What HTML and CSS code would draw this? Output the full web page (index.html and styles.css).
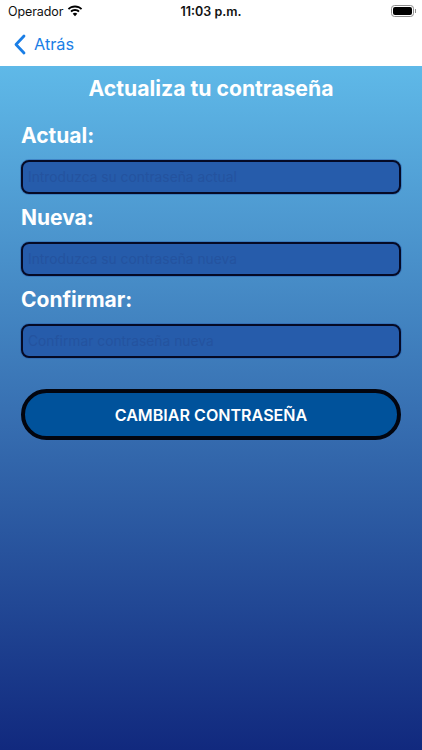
FILE: index.html
```html
<!DOCTYPE html>
<html lang="es">
<head>
<meta charset="utf-8">
<title>Actualiza tu contraseña</title>
<link rel="stylesheet" href="styles.css">
</head>
<body>
<div class="app">
  <header class="top">
    <div class="status">
      <div class="status-left">
        <span class="carrier">Operador</span>
        <svg class="wifi" width="16" height="12" viewBox="0 0 16 12"><path d="M8 2.4c2.3 0 4.4.9 5.900 2.300l1.300-1.300C13.300 1.600 10.800.4 8 .4S2.700 1.600.8 3.400l1.300 1.300C3.600 3.300 5.700 2.400 8 2.400z"/><path d="M8 6c1.300 0 2.400.5 3.300 1.300l1.300-1.300C11.400 4.800 9.800 4.100 8 4.100s-3.400.7-4.600 1.900l1.300 1.300C5.600 6.500 6.700 6 8 6z"/><path d="M8 7.700c-.9 0-1.700.3-2.300 1L8 11.200l2.300-2.500c-.6-.7-1.400-1-2.300-1z"/></svg>
      </div>
      <span class="time">11:03 p.m.</span>
      <div class="battery"><span class="battery-body"><span class="battery-fill"></span></span><span class="battery-cap"></span></div>
    </div>
    <nav class="nav">
      <svg class="chevron" width="13" height="21" viewBox="0 0 13 21"><path d="M11 2 3 10.500 11 19" fill="none" stroke="#1a7ee6" stroke-width="2.800" stroke-linecap="round" stroke-linejoin="round"/></svg>
      <span class="back">Atrás</span>
    </nav>
  </header>
  <main class="screen">
    <h1 class="title">Actualiza tu contraseña</h1>
    <div class="field">
      <label class="label">Actual:</label>
      <div class="input">Introduzca su contraseña actual</div>
    </div>
    <div class="field">
      <label class="label">Nueva:</label>
      <div class="input">Introduzca su contraseña nueva</div>
    </div>
    <div class="field">
      <label class="label">Confirmar:</label>
      <div class="input">Confirmar contraseña nueva</div>
    </div>
    <button class="submit">CAMBIAR CONTRASEÑA</button>
  </main>
</div>
</body>
</html>
```
FILE: styles.css
```css
* { box-sizing: border-box; }
html, body { margin: 0; height: 100%; }
body { font-family: Inter, "Liberation Sans", sans-serif; overflow: hidden; }
.app { width: 422px; height: 750px; display: flex; flex-direction: column; background: #fff; }
.top { height: 66px; flex: none; background: #fff; }
.status { height: 22px; display: flex; align-items: center; justify-content: space-between; padding: 0 6px 0 8px; position: relative; color: #111; font-size: 12.5px; }
.status-left { display: flex; align-items: center; gap: 4px; }
.carrier { letter-spacing: -0.1px; }
.wifi { fill: #000; }
.time { position: absolute; left: 0; right: 0; text-align: center; font-weight: 600; font-size: 12.5px; }
.battery { display: flex; align-items: center; gap: 1px; }
.battery-body { width: 23px; height: 12px; border: 1px solid #8e8e8e; border-radius: 3.5px; padding: 1px; display: block; }
.battery-fill { display: block; height: 100%; background: #000; border-radius: 2px; }
.battery-cap { width: 1px; height: 4px; background: #8e8e8e; }
.nav { height: 44px; display: flex; align-items: center; gap: 8px; padding: 0 0 0 13px; }
.back { color: #1a7ee6; font-size: 16.3px; }
.screen { flex: 1; background: linear-gradient(180deg, #5fb9e8 0%, #11297e 100%); padding: 9px 21px 0; display: flex; flex-direction: column; }
.title { margin: 0 0 21px; color: #fff; font-size: 21.2px; line-height: 27px; font-weight: 700; text-align: center; }
.field { display: flex; flex-direction: column; }
.label { color: #fff; font-size: 21px; line-height: 26px; font-weight: 700; margin-bottom: 11px; }
.input { height: 34px; background: #265cab; border: 2px solid #050a25; border-radius: 8px; color: #24539f; font-size: 13.8px; line-height: 30px; padding: 0 5px; margin-bottom: 11px; overflow: hidden; white-space: nowrap; box-shadow: 0 0 0 1px rgba(38, 92, 171, .45); }
.submit { margin-top: 20px; height: 51px; width: 100%; background: #00529b; border: 4px solid #02050f; border-radius: 26px; color: #fff; font-family: inherit; font-size: 16.1px; font-weight: 600; }
```
